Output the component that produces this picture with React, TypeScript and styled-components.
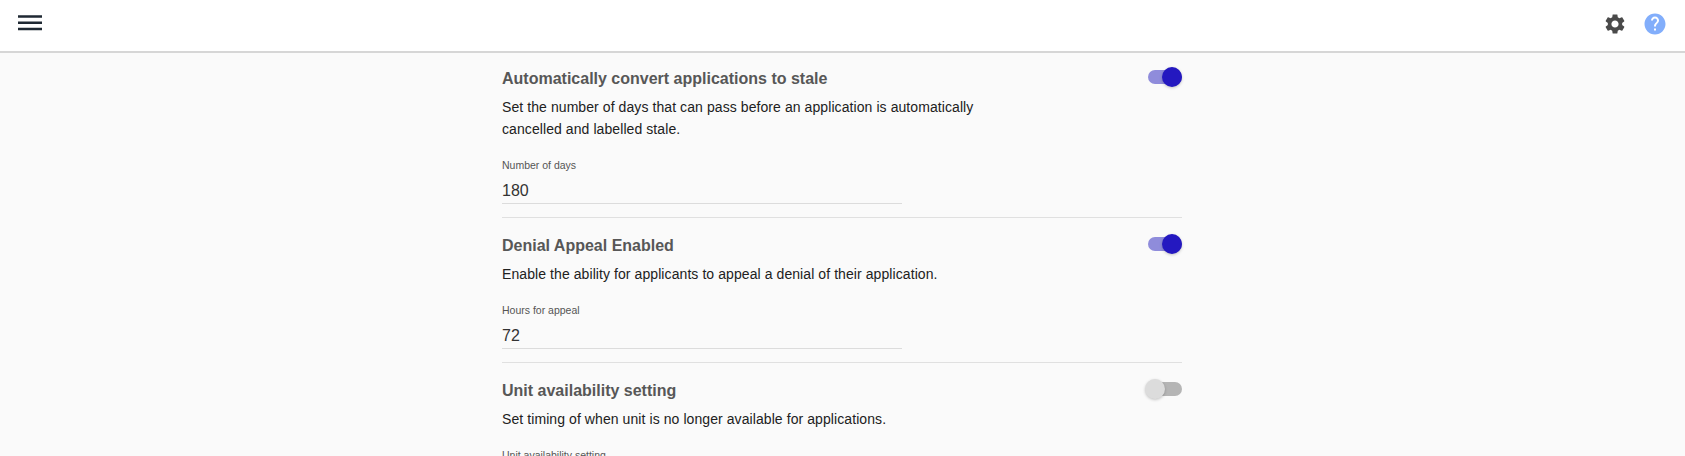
import React from "react";
import styled, { createGlobalStyle } from "styled-components";

const Global = createGlobalStyle`
  html, body { margin: 0; padding: 0; height: 456px; overflow: hidden; background: #fafafa; }
  body { font-family: "Liberation Sans", Arial, sans-serif; }
`;

const Page = styled.div`
  height: 456px;
  overflow: hidden;
  background: #fafafa;
`;

const Header = styled.header`
  box-sizing: border-box;
  height: 53px;
  background: #fff;
  border-bottom: 2px solid #d6d6d6;
  display: flex;
  align-items: flex-start;
  justify-content: space-between;
  padding: 8px 12px 0 12px;
`;

const IconButton = styled.div`
  width: 36px;
  height: 30px;
  display: flex;
  align-items: center;
  justify-content: center;
`;

const RightIcons = styled.div`
  display: flex;
  gap: 4px;
  padding-top: 1px;
`;

const Content = styled.main`
  box-sizing: border-box;
  width: 681px;
  padding-right: 1px;
  margin: 0 auto;
`;

const Section = styled.section<{ $last?: boolean }>`
  box-sizing: border-box;
  height: 145px;
  padding-top: 17px;
  border-bottom: ${(p) => (p.$last ? "none" : "1px solid #e0e0e0")};
`;

const FirstSection = styled(Section)`
  height: 165px;
  padding-top: 15px;
`;

const TitleRow = styled.div`
  display: flex;
  justify-content: space-between;
  align-items: flex-start;
  height: 22px;
`;

const Title = styled.h3`
  margin: 0;
  font-size: 16px;
  line-height: 22px;
  font-weight: 700;
  color: #575757;
`;

const Description = styled.p`
  margin: 6px 0 0;
  width: 480px;
  font-size: 14px;
  letter-spacing: 0.08px;
  line-height: 22px;
  color: #212121;
`;

const Field = styled.div`
  width: 400px;
  margin-top: 18px;
  border-bottom: 1px solid #dcdcdc;
`;

const FieldLabel = styled.div`
  font-size: 10.5px;
  line-height: 14px;
  color: #555;
`;

const FieldValue = styled.div`
  margin-top: 8px;
  font-size: 16px;
  line-height: 22px;
  padding-bottom: 1px;
  color: #333;
`;

const SwitchRoot = styled.div`
  position: relative;
  width: 34px;
  height: 14px;
  margin: 2px 0 0 0;
`;

const SwitchTrack = styled.div<{ $on: boolean }>`
  position: absolute;
  inset: 0;
  border-radius: 7px;
  background: ${(p) => (p.$on ? "#8f8cdb" : "#b5b5b5")};
`;

const SwitchThumb = styled.div<{ $on: boolean }>`
  position: absolute;
  top: -3px;
  width: 20px;
  height: 20px;
  border-radius: 50%;
  left: ${(p) => (p.$on ? "14px" : "-3px")};
  background: ${(p) => (p.$on ? "#2418c0" : "#dcdcdc")};
  box-shadow: 0 1px 3px rgba(0, 0, 0, 0.22);
`;

const Switch = ({ on }: { on: boolean }) => (
  <SwitchRoot>
    <SwitchTrack $on={on} />
    <SwitchThumb $on={on} />
  </SwitchRoot>
);

const Block = ({
  title,
  desc,
  label,
  value,
  on,
}: {
  title: string;
  desc: React.ReactNode;
  label: string;
  value: string;
  on: boolean;
}) => (
  <>
    <TitleRow>
      <Title>{title}</Title>
      <Switch on={on} />
    </TitleRow>
    <Description>{desc}</Description>
    <Field>
      <FieldLabel>{label}</FieldLabel>
      <FieldValue>{value}</FieldValue>
    </Field>
  </>
);

export default function App() {
  return (
    <Page>
      <Global />
      <Header>
        <IconButton>
          <svg width="24" height="18" viewBox="0 0 24 18">
            <path d="M0 2.5h24M0 8.7h24M0 15h24" stroke="#1f2933" strokeWidth="2.6" fill="none" />
          </svg>
        </IconButton>
        <RightIcons>
          <IconButton>
            <svg width="24" height="24" viewBox="0 0 24 24" fill="#4a4a4a">
              <path d="M19.14 12.94c.04-.3.06-.61.06-.94 0-.32-.02-.64-.07-.94l2.03-1.58c.18-.14.23-.41.12-.61l-1.92-3.32c-.12-.22-.37-.29-.59-.22l-2.39.96c-.5-.38-1.03-.7-1.62-.94l-.36-2.54c-.04-.24-.24-.41-.48-.41h-3.84c-.24 0-.43.17-.47.41l-.36 2.54c-.59.24-1.13.57-1.62.94l-2.39-.96c-.22-.08-.47 0-.59.22L2.74 8.87c-.12.21-.08.47.12.61l2.03 1.58c-.05.3-.09.63-.09.94s.02.64.07.94l-2.03 1.58c-.18.14-.23.41-.12.61l1.92 3.32c.12.22.37.29.59.22l2.39-.96c.5.38 1.03.7 1.62.94l.36 2.54c.05.24.24.41.48.41h3.84c.24 0 .44-.17.47-.41l.36-2.54c.59-.24 1.13-.56 1.62-.94l2.39.96c.22.08.47 0 .59-.22l1.92-3.32c.12-.22.07-.47-.12-.61l-2.01-1.58zM12 15.6c-1.98 0-3.6-1.62-3.6-3.6s1.62-3.6 3.6-3.6 3.6 1.62 3.6 3.6-1.62 3.6-3.6 3.6z" />
            </svg>
          </IconButton>
          <IconButton>
            <svg width="24" height="24" viewBox="0 0 24 24" fill="#82aefb">
              <path d="M12 1.5C6.2 1.5 1.5 6.2 1.5 12S6.2 22.5 12 22.5 22.5 17.8 22.5 12 17.8 1.5 12 1.5zm1 17h-2v-2h2v2zm2.07-7.75l-.9.92C13.45 12.4 13 13 13 14.5h-2V14c0-1.1.45-2.1 1.17-2.83l1.24-1.26c.37-.36.59-.86.59-1.41 0-1.1-.9-2-2-2s-2 .9-2 2H8c0-2.21 1.79-4 4-4s4 1.79 4 4c0 .88-.36 1.68-.93 2.25z" />
            </svg>
          </IconButton>
        </RightIcons>
      </Header>
      <Content>
        <FirstSection>
          <Block
            title="Automatically convert applications to stale"
            desc="Set the number of days that can pass before an application is automatically cancelled and labelled stale."
            label="Number of days"
            value="180"
            on
          />
        </FirstSection>
        <Section>
          <Block
            title="Denial Appeal Enabled"
            desc="Enable the ability for applicants to appeal a denial of their application."
            label="Hours for appeal"
            value="72"
            on
          />
        </Section>
        <Section $last>
          <Block
            title="Unit availability setting"
            desc="Set timing of when unit is no longer available for applications."
            label="Unit availability setting"
            value=""
            on={false}
          />
        </Section>
      </Content>
    </Page>
  );
}
